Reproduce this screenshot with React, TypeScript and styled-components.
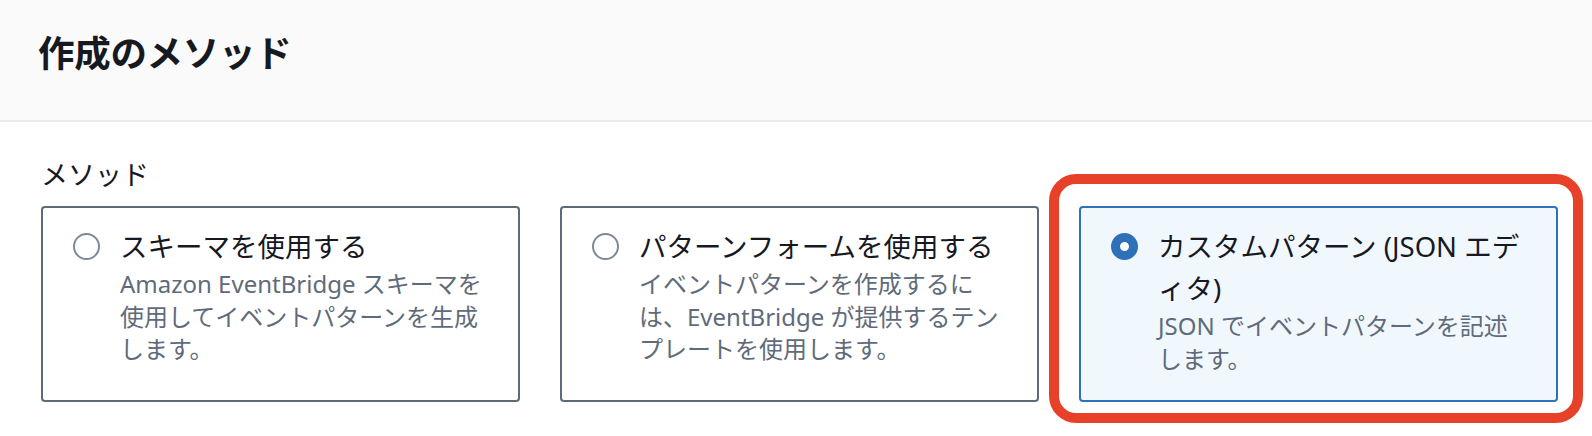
import React from "react";
import styled, { createGlobalStyle } from "styled-components";

const GlobalStyle = createGlobalStyle`
  html, body {
    margin: 0;
    padding: 0;
    background: #ffffff;
  }
  body {
    font-family: "Noto Sans", "Noto Sans CJK JP", sans-serif;
    color: #16191f;
  }
`;

const Root = styled.div({
  width: "1592px",
  height: "436px",
  overflow: "hidden",
  background: "#ffffff",
});

const Header = styled.div({
  boxSizing: "border-box",
  height: "122px",
  padding: "29px 40px 0 38px",
  background: "#fafafa",
  borderBottom: "2px solid #e9ebed",
});

const Heading = styled.h2({
  margin: 0,
  fontSize: "36.5px",
  lineHeight: "48px",
  fontWeight: 700,
  color: "#16191f",
  letterSpacing: "-0.3px",
});

const Body = styled.div({
  padding: "37px 34px 0 41px",
});

const FieldLabel = styled.div({
  fontSize: "27px",
  lineHeight: "32px",
  color: "#16191f",
  marginBottom: "15px",
});

const Tiles = styled.div({
  display: "grid",
  gridTemplateColumns: "repeat(3, 479px)",
  columnGap: "40px",
});

const TileWrap = styled.div({
  position: "relative",
  display: "flex",
});

const Tile = styled.div<{ $selected?: boolean }>((p) => ({
  boxSizing: "border-box",
  flex: 1,
  minHeight: "196px",
  display: "flex",
  gap: "20px",
  padding: "18px 31px 25px 30px",
  border: `2px solid ${p.$selected ? "#2f71b9" : "#5f6b7a"}`,
  borderRadius: "4px",
  background: p.$selected ? "#f1f8fd" : "#ffffff",
}));

const Radio = styled.span<{ $checked?: boolean }>((p) => ({
  boxSizing: "border-box",
  flex: "0 0 auto",
  width: "27px",
  height: "27px",
  marginTop: "7px",
  borderRadius: "50%",
  border: p.$checked ? "9px solid #2f71b9" : "2.5px solid #7d8998",
  background: "#ffffff",
}));

const TileText = styled.div({
  display: "flex",
  flexDirection: "column",
  minWidth: 0,
  flex: 1,
});

const TileTitle = styled.div({
  fontSize: "27.5px",
  lineHeight: "42px",
  color: "#16191f",
});

const TileDesc = styled.div({
  fontSize: "24px",
  lineHeight: "32.5px",
  color: "#5f6b7a",
});

const Highlight = styled.div({
  position: "absolute",
  top: "-32px",
  left: "-30px",
  right: "-25px",
  bottom: "-21px",
  border: "10.5px solid #e8412a",
  borderRadius: "27px",
  pointerEvents: "none",
});

interface TileProps {
  title: string;
  desc: string;
  selected?: boolean;
  highlighted?: boolean;
}

function MethodTile({ title, desc, selected, highlighted }: TileProps) {
  return (
    <TileWrap>
      <Tile $selected={selected}>
        <Radio $checked={selected} />
        <TileText>
          <TileTitle>{title}</TileTitle>
          <TileDesc>{desc}</TileDesc>
        </TileText>
      </Tile>
      {highlighted && <Highlight />}
    </TileWrap>
  );
}

export default function App() {
  return (
    <Root>
      <GlobalStyle />
      <Header>
        <Heading>作成のメソッド</Heading>
      </Header>
      <Body>
        <FieldLabel>メソッド</FieldLabel>
        <Tiles>
          <MethodTile
            title="スキーマを使用する"
            desc="Amazon EventBridge スキーマを使用してイベントパターンを生成します。"
          />
          <MethodTile
            title="パターンフォームを使用する"
            desc="イベントパターンを作成するには、EventBridge が提供するテンプレートを使用します。"
          />
          <MethodTile
            title="カスタムパターン (JSON エディタ)"
            desc="JSON でイベントパターンを記述します。"
            selected
            highlighted
          />
        </Tiles>
      </Body>
    </Root>
  );
}
